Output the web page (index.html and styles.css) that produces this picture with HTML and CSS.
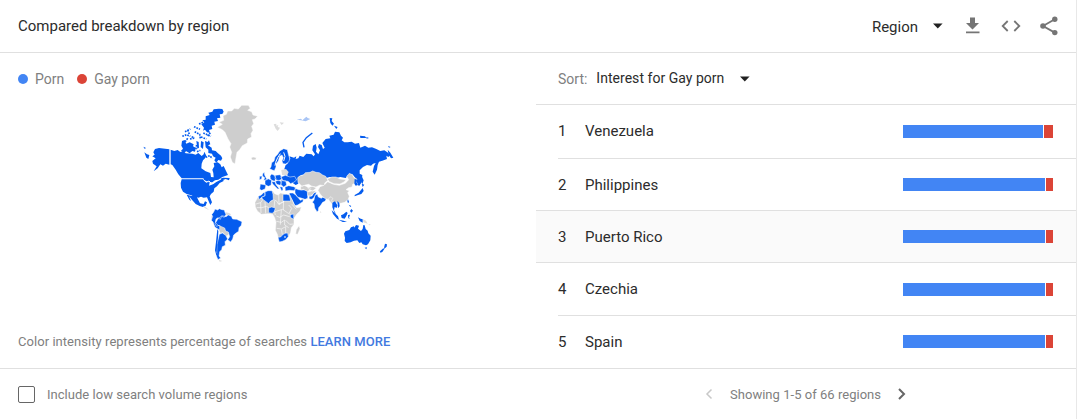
FILE: index.html
```html
<!DOCTYPE html>
<html lang="en">
<head>
  <meta charset="UTF-8">
  <title>Compared breakdown by region</title>
  <link rel="stylesheet" href="styles.css">
</head>
<body>
  <div class="widget">
    <div class="header">
      <h1>Compared breakdown by region</h1>
      <div class="tools">
        <span class="region-select">Region</span>
        <svg class="arrow" width="10" height="6" viewBox="0 0 10 6"><path d="M0 .5h9.600L4.800 5.500z"/></svg>
        <svg class="icon download" width="16" height="18" viewBox="0 0 16 18"><path d="M5 .5h5v5.500h4L7.500 12.500 1 6h4zM1 14.500h13.500v1.800H1z"/></svg>
        <svg class="icon embed" width="20" height="12" viewBox="0 0 20 12"><path class="line" d="M6.700 1 1.700 6l5 5M13.300 1l5 5-5 5"/></svg>
        <svg class="icon share" width="20" height="20" viewBox="0 0 20 20"><path class="line" d="M15.800 3.200 4 10l11.800 6.600"/><circle cx="15.800" cy="3.200" r="2.700"/><circle cx="4" cy="10" r="2.800"/><circle cx="15.800" cy="16.600" r="2.700"/></svg>
      </div>
    </div>

    <div class="content">
      <div class="map-panel">
        <div class="legend">
          <span class="dot blue"></span><span>Porn</span>
          <span class="dot red"></span><span>Gay porn</span>
        </div>
        <svg class="map" width="270" height="170" viewBox="0 0 810 510">
          <!-- Greenland, Iceland -->
          <path class="none" d="M247 97L262 88 252 82 266 76 264 62 274 58 278 48 290 48 298 40 310 42 320 31 340 31 346 40 338 46 350 50 354 60 368 64 360 72 352 74 356 86 350 94 354 106 348 116 350 126 338 132 337 144 322 152 314 164 306 172 303 188 300 207 292 202 286 186 290 172 284 156 288 146 279 132 270 112 262 104zM348 189L354 186 364 188 362 194 352 195z"/>
          <!-- Alaska and Canada -->
          <path d="M55 172L60 162 72 159 103 163V209L92 206 84 212 76 208 68 220 56 229 65 214 54 206 52 198 62 190 52 184 59 179zM25 155L32 158 30 163zM28 172L36 178 43 180 40 192 34 188zM107 164L118 168 128 165 136 171 146 168 152 175 172 176 182 179 190 174 200 183 206 178 208 170 214 182 210 190 204 196 200 206 199 220 212 229 226 234 228 246 236 247 235 234 232 224 238 214 236 204 248 202 256 208 260 217 266 213 272 226 279 240 262 246 250 254 240 256 232 262 224 262 208 256 205 250H140L130 238 122 224 112 210 107 208z"/>
          <path d="M139 152L141 138 149 135 154 146 164 142 176 148 174 154 182 158 180 170 172 168 164 175 154 169 146 173 138 167 144 161zM184 138L191 141 192 158 187 161zM198 138L206 142 204 162 197 156zM210 138L218 141 222 136 226 148 219 151 230 158 231 166 242 168 248 174 258 182 262 190 258 197 250 195 244 203 238 196 242 188 234 184 231 176 220 174 220 164 212 157zM199 88L208 82 202 76 212 74 212 64 224 60 220 53 232 50 236 43 252 41 262 42 266 50 262 57 254 58 256 68 246 70 249 78 238 80 240 89 230 92 232 102 222 105 225 113 216 112 210 104 204 107 207 98z"/>
          <path class="islands" d="M142 124L155 119 166 124M150 110L166 102M165 132L180 129M177 95L195 103M179 110L194 118 196 130M158 105L164 120M205 114L228 124M198 126L214 132M204 82L190 88M218 123L226 113M170 125L178 128M212 187L224 182 232 190M158 130L150 141M185 150L182 166M186 170L196 166"/>
          <!-- United States, Mexico -->
          <path d="M140 253H204L212 260 224 262 222 272 234 268 244 261 254 256 264 251 266 258 254 264 246 274 238 280 236 290 228 297 224 304 231 322 226 330 221 319 216 307 206 308 198 305 190 308 182 305 166 300 155 297 144 290 138 278 137 264zM155 299L170 303 178 301 185 305 190 315 195 325 206 327 210 319 216 322 212 332 204 336 194 333 182 327 172 316 162 304 168 318 163 314zM256 251L264 248 284 249 282 256 272 252 262 256z"/>
          <path class="lakes" d="M206 255L214 262 222 258 230 266 240 262"/>
          <path class="none-light" d="M204 332L212 336 222 345 217 343 209 339zM225 349L234 352M72 324L78 326M19 398L26 400M272 352L282 354 288 358 283 363 273 360zM230 363L237 367 232 373 229 368z"/>
          <!-- South America -->
          <path class="none" d="M248 388L262 382 268 392 278 400 283 408 281 420 272 424 264 413 256 415 250 402z"/>
          <path class="state" d="M236 351L240 342 248 345 253 341 261 344 268 345 270 352 273 358 268 367 260 364 256 373 249 368 243 372 241 382 247 389 254 394 254 405 240 397 234 381 229 376 233 364 230 359zM250 370L261 362 273 365 280 360 289 364 293 372 305 373 321 380 319 391 312 398 311 409 302 415 296 420 293 432 287 441 278 434 284 425 280 411 272 408 269 399 260 395 252 391 244 394 240 386zM253 418L262 414 272 421 278 432 270 440 271 451 262 455 260 464 254 470 252 483 257 489 249 494 245 485 246 449z"/>
          <path d="M247 402L250 408 249 428 246 456 245 474 252 487 244 481 240 466 243 441z"/>
          <path class="none-light" d="M251 494L262 498 254 500z"/>
          <!-- Svalbard and the Arctic islands -->
          <path class="none-light" d="M416 88L424 86 424 92 430 90 428 96 435 98 428 108 422 101zM434 82L447 83 440 90z"/>
          <path class="faint" d="M485 74L498 71 502 76 514 65 518 69 526 72 512 79 498 76zM556 70L562 71"/>
          <!-- Russia -->
          <path d="M452 210L458 206 456 198 466 192 463 184 477 188 484 184 482 192 490 190 494 182 505 186 514 176 530 178 536 184 540 178 532 166 534 152 542 147 545 158 543 170 550 178 555 166 549 156 552 147 560 150 564 162 569 158 562 144 572 132 586 130 583 122 596 119 600 110 613 112 618 122 624 128 620 136 628 142 638 142 650 140 660 146 672 144 676 158 690 152 700 158 711 157 724 162 736 168 748 166 757 172 766 180 760 186 754 182 756 192 742 197 732 200 728 210 726 224 719 239 713 230 717 213 722 204 714 206 708 212 696 210 684 216 674 226 674 236 682 240 680 262 672 274 668 268 662 250 652 238 640 240 632 249 616 246 600 250 584 246 570 250 555 242 544 234 528 232 515 238 500 240 490 246 490 266 482 270 470 262 468 252 458 244 454 232 448 222z"/>
          <path class="ridge" d="M507 157L504 142 514 128 532 114"/>
          <path d="M584 69L592 70 590 78 597 86 592 92 586 84zM597 92L608 96 604 102zM675 122L690 124 694 129 676 129zM694 126L702 129 695 131zM759 153L767 156 762 158zM758 164L766 173 775 188 768 190 761 179zM680 244L686 256 682 268 678 258z"/>
          <path class="state" d="M404 221L408 215 410 203 417 198 420 186 428 178 434 168 446 161 457 164 460 178 464 190 462 200 452 207 444 206 441 198 445 188 441 180 434 184 430 198 423 206 423 216 418 227 412 225z"/>
          <path class="lakes" d="M436 176L428 188 422 202 420 212M446 172L450 184 446 198"/>
          <g transform="translate(315 210)">
            <!-- Europe -->
            <path class="state" d="M68 26l5-4 1 8 4 8 4 6-11 2 3-8-7-5zM59 34l7-1-1 9-7 2zM61 57l17 3-3 12-10 4-6-3zM75 46l9-5 11 5-2 15-8 3-10-5zM90 33l5-6 8 4 5 9-4 9-9-3-4-5zM95 50l10 0 3 9 10 12-5 1-15-15zM106 31l15-2 5 13-10 5-11-4zM106 49l9-3 11 4-5 11-11-3zM122 46l15 1 3 13-9 6-8-7zM119 65l9 1 1 9-4 3zM122 36l14-5 14 5 14-2 6 11-9 7-9 4-8-7-14-1z"/>
            <path class="none-light" d="M124 15l14-3 8 9-4 9-16 0z"/>
            <!-- Middle East and South Asia -->
            <path class="state" d="M135 66l11-4 15 3 7 4-5 8-14-1-13 2zM148 84l11 0 8 6 8 8 6 8 9-4-1 8-16 10-8 2-9-18-8-10zM165 70l11 4 10 1 10-1 8 6-1 20-8 3-9-3-14-4-7-12zM207 94l9-1 5-9 8-3-2 9-6 8-5 5-8-1zM225 89l7-1 3 8 9 4 4-3 12 2-5 10-7 3-6 9-6 7-1 10-4 2-7-11-2-13-5-4 5-7z"/>
            <path class="none" d="M173 38L181 32 190 30 196 23 210 22 218 18 228 22 238 23 248 30 257 34 264 46 254 54 254 62 240 60 228 66 216 64 206 58 196 60 186 64 180 58 174 52zM182 65L192 61 201 65 212 71 203 80 190 73 182 75zM203 68L218 64 229 69 218 78 208 74zM202 82L214 78 228 77 220 86 212 93 203 92z"/>
            <path class="none" d="M240 65L252 61 263 50 280 58 298 61 316 55 326 44 320 34 328 25 337 29 342 38 351 42 346 54 338 58 336 66 326 68 318 74 328 77 323 83 328 94 324 104 314 112 302 115 292 113 280 114 270 105 256 101 246 94 240 86 234 76z"/>
            <path class="none" d="M262 42L276 36 288 36 300 42 318 44 312 51 300 57 282 56 268 50zM265 101l8-6 5 5-3 7 4 8-3 2-8-10z"/>
            <path d="M277 113l8-4 7 12-2 8-6-3-2 10 6 11-5-5-6-15zM292 108l6 6 1 10-5 6zM275 136l10 9 9 9 3 10-6-3-12-14zM303 151l7-3 9-8 4 4-4 9-5 8-9-2zM296 164l15 3 10 4-13 0zM324 150l6-1-3 9 3 3-5-1zM324 103l3 8-3 4-2-7zM326 119l8 4-3 3zM334 132l5 5-5 6-4-5zM354 157l8 4 6 2 0 10-9-5zM344 42l7 2-1 9 4 7-7 2-4-6zM365 56l8 3-5 7zM368 69l3 9-7 9-12 4-8 3 0-4 12-7 7-8z"/>
            <path class="none-light" d="M369 163l9 4 5 9-13-4zM240 138l4 4-2 3zM386 177l7 2-6 2z"/>
            <!-- Africa -->
            <path class="none" d="M45 112L54 96 64 90 78 82 98 78 104 86 114 90 122 84 136 88 150 90 156 104 162 118 170 128 184 126 180 138 170 148 162 160 162 178 154 188 152 202 146 214 130 228 117 230 112 208 106 196 108 172 104 158 98 148 84 146 64 148 52 138 46 126z"/>
            <path class="borders" d="M48 117l14-4 8-12 16 12 14-9 10 4 5 9 18-8M62 113l1 31M75 109l2 36M50 128l15 0 15-4 8 6M54 99l12 2M104 108l-2 22 4 20M116 86l1 33 15-10M131 90l-1 45M105 140l23-7 14 10 11 6M109 153l10 4 12-7 18 5M124 134l-3 45M109 169l15 3 10-7 0 15 12 8M110 190l14 2 13-7 0 20M124 193l4 20M137 166l12 12 12-1M146 120l9 10-7 14M156 118l13 15"/>
            <path class="state" d="M55 94l9-4 6-7 6 0-1 9-10 5-8 7zM73 82l11-5 12 0 3 11 1 16-8 4-6 8-16-12-6-7 11-5zM129 88l11 0 8 2 4 18-23 0zM86 129l9-3 11 3-3 10-6 6-11-2zM151 149l10-2 0 8 0 8-10-6zM114 217l8-1 5-6 8-5 8-1 2 11-8 9-10 5-9 2z"/>
            <path class="lesotho" d="M133 214h4v4h-4z"/>
            <path class="none" d="M167 207l2-13 8-12 3 9-7 17z"/>
            <!-- Australia and New Zealand -->
            <path d="M312 206L316 199 328 195 333 187 342 184 343 188 348 180 357 182 354 191 363 198 368 192 370 180 374 181 377 192 383 197 385 205 392 212 391 226 384 238 378 241 368 238 364 232 358 234 352 226 342 227 332 232 320 234 314 228 315 218zM374 248l7-1-2 6zM435 236l6 2-1 7-8 7 1-8zM430 250l3 2-6 9-6 2-1-4z"/>
          </g>
        </svg>
        <p class="hint">Color intensity represents percentage of searches <a>LEARN MORE</a></p>
      </div>

      <div class="list-panel">
        <div class="sort">
          <span class="sort-label">Sort:</span>
          <span class="sort-value">Interest for Gay porn</span>
          <svg class="arrow" width="10" height="6" viewBox="0 0 10 6"><path d="M0 .5h9.600L4.800 5.500z"/></svg>
        </div>
        <div class="row first">
          <span class="rank">1</span><span class="name">Venezuela</span>
          <div class="bar"><div class="blue" style="width: 140px"></div><div class="red" style="width: 9px"></div></div>
        </div>
        <div class="row">
          <span class="rank">2</span><span class="name">Philippines</span>
          <div class="bar"><div class="blue" style="width: 142px"></div><div class="red" style="width: 7px"></div></div>
        </div>
        <div class="row active">
          <span class="rank">3</span><span class="name">Puerto Rico</span>
          <div class="bar"><div class="blue" style="width: 142px"></div><div class="red" style="width: 7px"></div></div>
        </div>
        <div class="row">
          <span class="rank">4</span><span class="name">Czechia</span>
          <div class="bar"><div class="blue" style="width: 142px"></div><div class="red" style="width: 7px"></div></div>
        </div>
        <div class="row last">
          <span class="rank">5</span><span class="name">Spain</span>
          <div class="bar"><div class="blue" style="width: 142px"></div><div class="red" style="width: 7px"></div></div>
        </div>
      </div>
    </div>

    <div class="footer">
      <label class="low-volume"><span class="checkbox"></span>Include low search volume regions</label>
      <div class="pager">
        <svg class="prev" width="8" height="12" viewBox="0 0 8 12"><path d="M6.500 1.500 2 6l4.500 4.500"/></svg>
        <span>Showing 1-5 of 66 regions</span>
        <svg class="next" width="8" height="12" viewBox="0 0 8 12"><path d="M1 1l5 5-5 5"/></svg>
      </div>
    </div>
  </div>
</body>
</html>
```
FILE: styles.css
```css
body {
  margin: 0;
  font-family: Roboto, sans-serif;
  font-size: 15px;
  color: #2c2c2c;
  background: #fff;
}

.widget {
  box-sizing: border-box;
  width: 1077px;
  height: 419px;
  border-right: 1px solid #e8e8e8;
  overflow: hidden;
}

.header {
  display: flex;
  justify-content: space-between;
  box-sizing: border-box;
  height: 53px;
  padding: 0 18px;
  border-bottom: 1px solid #e0e0e0;
}

h1 {
  margin: 0;
  font-size: 15px;
  font-weight: 400;
  line-height: 52px;
}

.tools {
  display: flex;
  align-items: center;
  height: 52px;
}

.region-select {
  padding-top: 1px;
}

.tools .arrow {
  margin-left: 15px;
}

.arrow {
  fill: #212121;
}

.icon {
  fill: #757575;
}

.icon .line {
  fill: none;
  stroke: #757575;
  stroke-width: 1.8;
}

.download {
  margin-left: 22px;
}

.embed {
  margin-left: 20px;
}

.share {
  margin-left: 18px;
  margin-right: -1px;
}

.content {
  display: flex;
  height: 315px;
  border-bottom: 1px solid #e0e0e0;
}

.map-panel {
  display: flex;
  flex-direction: column;
  width: 536px;
}

.legend {
  display: flex;
  align-items: center;
  height: 42px;
  padding: 5px 18px 0;
  font-size: 14px;
  color: #808080;
}

.dot {
  width: 10px;
  height: 10px;
  margin-right: 7px;
  border-radius: 50%;
}

.dot.red {
  margin-left: 13px;
}

.blue {
  background: #4285f4;
}

.red {
  background: #db4437;
}

.map {
  margin: -5px 0 0 135px;
  fill: #055cee;
}

.map .none {
  fill: #cecece;
  stroke: #fff;
  stroke-width: 1.5;
}

.map .none-light {
  fill: #dcdcdc;
}

.map .faint {
  fill: #a9c5f5;
}

.map .state {
  stroke: #fff;
  stroke-width: 1.5;
}

.map .islands {
  fill: none;
  stroke: #055cee;
  stroke-width: 5;
  stroke-dasharray: 5 3;
}

.map .ridge {
  fill: none;
  stroke: #055cee;
  stroke-width: 4;
}

.map .borders,
.map .lakes {
  fill: none;
  stroke: #fff;
  stroke-width: 1.8;
}

.map .lakes {
  stroke-width: 3;
}

.map .lesotho {
  fill: #fff;
}

.hint {
  margin: 67px 0 0 18px;
  font-size: 13px;
  line-height: 20px;
  letter-spacing: 0.05px;
  color: #808080;
}

.hint a {
  color: #4279e0;
  font-weight: 500;
}

.list-panel {
  width: 540px;
}

.sort {
  display: flex;
  align-items: center;
  box-sizing: border-box;
  height: 52px;
  padding-left: 22px;
  border-bottom: 1px solid #e0e0e0;
  font-size: 14px;
}

.sort-label {
  margin-right: 9px;
  color: #808080;
}

.sort-value {
  padding-bottom: 2px;
  letter-spacing: 0.03px;
}

.sort .arrow {
  margin-left: 16px;
}

.row {
  display: flex;
  align-items: center;
  box-sizing: border-box;
  height: 51px;
  padding-right: 23px;
  margin-left: 22px;
}

.row.first {
  height: 54px;
  padding-bottom: 1px;
  border-bottom: 1px solid #e0e0e0;
}

.row.active {
  height: 53px;
  margin-left: 0;
  padding-left: 22px;
  border-top: 1px solid #e0e0e0;
  border-bottom: 1px solid #e0e0e0;
  background: #fafafa;
}

.active + .row {
  height: 53px;
  border-bottom: 1px solid #e0e0e0;
}

.row.last {
  height: 52px;
  padding-bottom: 1px;
}

.rank {
  width: 27px;
}

.bar {
  display: flex;
  justify-content: space-between;
  width: 150px;
  margin-left: auto;
}

.bar div {
  height: 13px;
}

.footer {
  display: flex;
  align-items: center;
  height: 50px;
  padding-left: 18px;
  font-size: 13px;
  letter-spacing: 0.03px;
  color: #808080;
}

.low-volume {
  display: flex;
  align-items: center;
  width: 687px;
}

.checkbox {
  box-sizing: border-box;
  width: 17px;
  height: 17px;
  margin-right: 12px;
  border: 1px solid #666;
  border-radius: 2px;
}

.pager {
  display: flex;
  align-items: center;
}

.pager span {
  margin: 0 17px;
}

.pager path {
  fill: none;
  stroke: #666;
  stroke-width: 2;
}

.pager .prev path {
  stroke: #c8c8c8;
  stroke-width: 1.5;
}
```
